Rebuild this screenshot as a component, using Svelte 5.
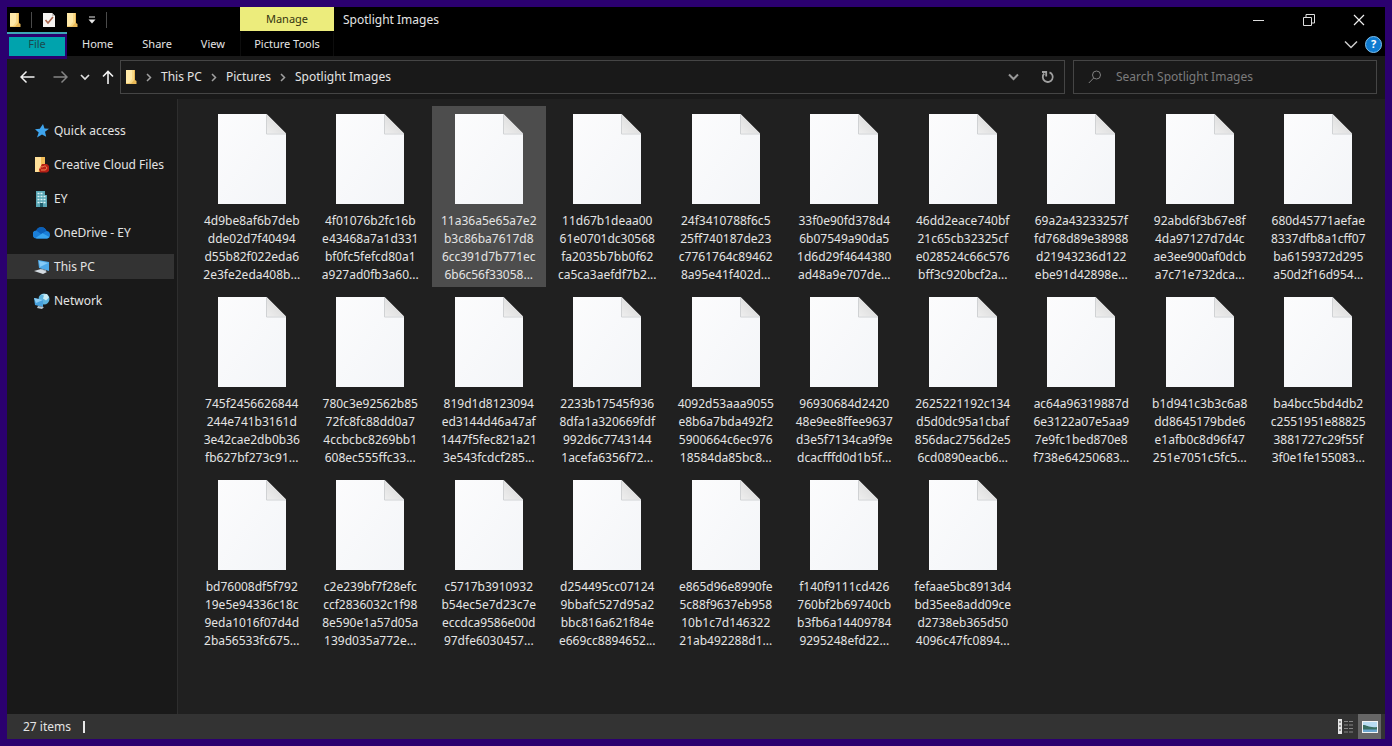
<script>
    let query = $state("");
    let selected = $state(2);
    let place = $state("This PC");

    const tabs = ["Home", "Share", "View"];
    const crumbs = ["This PC", "Pictures", "Spotlight Images"];

    const places = [
        { name: "Quick access", icon: "star" },
        { name: "Creative Cloud Files", icon: "cloudfiles" },
        { name: "EY", icon: "building" },
        { name: "OneDrive - EY", icon: "onedrive" },
        { name: "This PC", icon: "pc" },
        { name: "Network", icon: "network" },
    ];

    // One entry per file, broken into the lines shown under its icon
    const files = [
        "4d9be8af6b7deb dde02d7f40494 d55b82f022eda6 2e3fe2eda408b...",
        "4f01076b2fc16b e43468a7a1d331 bf0fc5fefcd80a1 a927ad0fb3a60...",
        "11a36a5e65a7e2 b3c86ba7617d8 6cc391d7b771ec 6b6c56f33058...",
        "11d67b1deaa00 61e0701dc30568 fa2035b7bb0f62 ca5ca3aefdf7b2...",
        "24f3410788f6c5 25ff740187de23 c7761764c89462 8a95e41f402d...",
        "33f0e90fd378d4 6b07549a90da5 1d6d29f4644380 ad48a9e707de...",
        "46dd2eace740bf 21c65cb32325cf e028524c66c576 bff3c920bcf2a...",
        "69a2a43233257f fd768d89e38988 d21943236d122 ebe91d42898e...",
        "92abd6f3b67e8f 4da97127d7d4c ae3ee900af0dcb a7c71e732dca...",
        "680d45771aefae 8337dfb8a1cff07 ba6159372d295 a50d2f16d954...",
        "745f2456626844 244e741b3161d 3e42cae2db0b36 fb627bf273c91...",
        "780c3e92562b85 72fc8fc88dd0a7 4ccbcbc8269bb1 608ec555ffc33...",
        "819d1d8123094 ed3144d46a47af 1447f5fec821a21 3e543fcdcf285...",
        "2233b17545f936 8dfa1a320669fdf 992d6c7743144 1acefa6356f72...",
        "4092d53aaa9055 e8b6a7bda492f2 5900664c6ec976 18584da85bc8...",
        "96930684d2420 48e9ee8ffee9637 d3e5f7134ca9f9e dcacfffd0d1b5f...",
        "2625221192c134 d5d0dc95a1cbaf 856dac2756d2e5 6cd0890eacb6...",
        "ac64a96319887d 6e3122a07e5aa9 7e9fc1bed870e8 f738e64250683...",
        "b1d941c3b3c6a8 dd8645179bde6 e1afb0c8d96f47 251e7051c5fc5...",
        "ba4bcc5bd4db2 c2551951e88825 3881727c29f55f 3f0e1fe155083...",
        "bd76008df5f792 19e5e94336c18c 9eda1016f07d4d 2ba56533fc675...",
        "c2e239bf7f28efc ccf2836032c1f98 8e590e1a57d05a 139d035a772e...",
        "c5717b3910932 b54ec5e7d23c7e eccdca9586e00d 97dfe6030457...",
        "d254495cc07124 9bbafc527d95a2 bbc816a621f84e e669cc8894652...",
        "e865d96e8990fe 5c88f9637eb958 10b1c7d146322 21ab492288d1...",
        "f140f9111cd426 760bf2b69740cb b3fb6a14409784 9295248efd22...",
        "fefaae5bc8913d4 bd35ee8add09ce d2738eb365d50 4096c47fc0894...",
    ].map((name) => name.split(" "));
</script>

{#snippet folder()}
    <svg width="12" height="16" viewBox="0 0 12 16" aria-hidden="true">
        <path d="M1 1h9v10l1.500 1v3H1z" fill="#e9b957" />
        <path d="M1 1h8v10l-3 3.500H1z" fill="#f9d987" />
        <path d="M1 1h6v9l-3 4H1z" fill="#ffe9a8" />
    </svg>
{/snippet}

{#snippet crumbArrow()}
    <svg width="6" height="9" viewBox="0 0 6 9" aria-hidden="true">
        <path d="M1 1l3.500 3.500L1 8" fill="none" stroke="#a0a0a0" stroke-width="1.500" />
    </svg>
{/snippet}

<div class="desktop">
    <div class="window">
        <header class="titlebar">
            <div class="quick">
                {@render folder()}
                <span class="rule"></span>
                <button class="bare" aria-label="Properties">
                    <svg width="14" height="16" viewBox="0 0 14 16">
                        <path d="M1 1h9l3 3v11H1z" fill="#f5f3f1" />
                        <path d="M10 1l3 3h-3z" fill="#c9c5c2" />
                        <path d="M3.500 8l2.500 3 5-6" fill="none" stroke="#a9664f" stroke-width="1.600" />
                    </svg>
                </button>
                <button class="bare" aria-label="New folder">{@render folder()}</button>
                <button class="bare" aria-label="Customize Quick Access Toolbar">
                    <svg width="8" height="8" viewBox="0 0 8 8">
                        <path d="M1 1h6" stroke="#e8e8e8" />
                        <path d="M.5 3.500h7L4 7.500z" fill="#e8e8e8" />
                    </svg>
                </button>
                <span class="rule"></span>
            </div>
            <div class="context">Manage</div>
            <h1>Spotlight Images</h1>
            <div class="controls">
                <button class="bare" aria-label="Minimize">
                    <svg width="12" height="12" viewBox="0 0 12 12">
                        <path d="M0 6.500h11" stroke="#ddd" />
                    </svg>
                </button>
                <button class="bare" aria-label="Restore">
                    <svg width="12" height="12" viewBox="0 0 12 12" fill="none" stroke="#ddd">
                        <path d="M.5 3.500h8v8h-8zM3 3V.5h8.500V9H9" />
                    </svg>
                </button>
                <button class="bare" aria-label="Close">
                    <svg width="12" height="12" viewBox="0 0 12 12">
                        <path d="M1 1l10 10M11 1L1 11" stroke="#eee" stroke-width="1.200" />
                    </svg>
                </button>
            </div>
        </header>

        <div class="ribbon">
            <div class="tabs">
                <button class="file">File</button>
                <div class="tab-list">
                    {#each tabs as tab}
                        <button>{tab}</button>
                    {/each}
                </div>
            </div>
            <button class="tools">Picture Tools</button>
            <div class="help">
                <button class="bare" aria-label="Expand the ribbon">
                    <svg width="14" height="9" viewBox="0 0 14 9">
                        <path d="M1 1.500l6 6 6-6" fill="none" stroke="#ccc" stroke-width="1.500" />
                    </svg>
                </button>
                <button class="bare question" aria-label="Help">?</button>
            </div>
        </div>

        <div class="location">
            <div class="history">
                <button class="bare" aria-label="Back">
                    <svg width="15" height="14" viewBox="0 0 15 14">
                        <path d="M6.500 1.500L1 7l5.500 5.500M1 7h13.500" fill="none" stroke="#f2f2f2" stroke-width="1.500" />
                    </svg>
                </button>
                <button class="bare" aria-label="Forward">
                    <svg width="15" height="14" viewBox="0 0 15 14">
                        <path d="M8.500 1.500L14 7l-5.500 5.500M14 7H.5" fill="none" stroke="#858585" stroke-width="1.500" />
                    </svg>
                </button>
                <button class="bare" aria-label="Recent locations">
                    <svg width="10" height="7" viewBox="0 0 10 7">
                        <path d="M1 1l4 4 4-4" fill="none" stroke="#e0e0e0" stroke-width="1.700" />
                    </svg>
                </button>
                <button class="bare" aria-label="Up">
                    <svg width="12" height="15" viewBox="0 0 12 15">
                        <path d="M1 6.500l5-5 5 5M6 1.500V14" fill="none" stroke="#f2f2f2" stroke-width="1.600" />
                    </svg>
                </button>
            </div>
            <nav class="address" aria-label="Address">
                {@render folder()}
                {#each crumbs as crumb}
                    {@render crumbArrow()}
                    <a href="#{crumb}">{crumb}</a>
                {/each}
                <div class="address-end">
                    <button class="bare" aria-label="Previous locations">
                        <svg width="11" height="8" viewBox="0 0 11 8">
                            <path d="M1 1.500l4.500 4.500L10 1.500" fill="none" stroke="#999" stroke-width="2" />
                        </svg>
                    </button>
                    <button class="bare" aria-label="Refresh">
                        <svg width="14" height="14" viewBox="0 0 14 14" fill="none" stroke="#a0a0a0" stroke-width="1.800">
                            <path d="M8.500 2.300A5 5 0 1 1 3.200 3.500" />
                            <path d="M1 2h4.200v4.500" />
                        </svg>
                    </button>
                </div>
            </nav>
            <label class="search">
                <svg width="14" height="14" viewBox="0 0 14 14" fill="none" stroke="#808080" aria-hidden="true">
                    <circle cx="8.500" cy="5" r="4" />
                    <path d="M5.700 8L.8 13" />
                </svg>
                <input type="text" aria-label="Search Spotlight Images" placeholder="Search Spotlight Images" bind:value={query} />
            </label>
        </div>

        <div class="body">
            <nav class="sidebar" aria-label="Places">
                {#each places as p}
                    <button class="place" class:current={place === p.name} onclick={() => (place = p.name)}>
                        <svg width="18" height="16" viewBox="0 0 18 16" aria-hidden="true">
                            {#if p.icon === "star"}
                                <path d="M10 1l1.500 4.500 4.500.3-4 3 1.200 5L9 11.500 4 14.500l1.700-5L2 6.300l4.800-.5z" fill="#3fa5ee" />
                            {:else if p.icon === "cloudfiles"}
                                <path d="M2 0h10v12l-2 3H2z" fill="#f2bd58" />
                                <path d="M2 0h6v11l-3 4H2z" fill="#ffe09a" />
                                <path d="M9 7h5l2 2v5l-2 1.500H7l-1-3z" fill="#b51f16" />
                                <path d="M7 12a2 2 0 0 1 3-2 2 2 0 1 1 2 3H8" fill="none" stroke="#f38a55" />
                            {:else if p.icon === "building"}
                                <path d="M3 0h9v4h2v12H3z" fill="#5aa6b5" />
                                <path d="M4.500 2.500h6M4.500 5.500h8M4.500 8.500h8M4.500 11.500h8" stroke="#d9f2f4" stroke-width="1.500" stroke-dasharray="2 1" />
                                <path d="M7 12h3v4H7z" fill="#1f5c6b" />
                            {:else if p.icon === "onedrive"}
                                <path d="M4 13.500a4 4 0 0 1-.8-8A5.500 5.500 0 0 1 13.500 6a3.800 3.800 0 0 1 .5 7.500z" fill="#1b7fd8" />
                                <path d="M3.200 5.500A5.500 5.500 0 0 1 13.500 6L8 9z" fill="#0b5fb8" />
                                <path d="M2.500 13L9.500 8.300l7 3.700a3 3 0 0 1-2.500 1.500H4z" fill="#38a5f0" />
                            {:else if p.icon === "pc"}
                                <path d="M5 1l11 2v9L6 9z" fill="#4da9e8" />
                                <path d="M6 2l9 2-8 4z" fill="#85cbf7" />
                                <path d="M9 10l4 1v2l-4-1z" fill="#9aa4ad" />
                                <path d="M1 12l7-2 6 3-4 2z" fill="#d5dce2" />
                            {:else}
                                <circle cx="11" cy="6" r="5.500" fill="#5db4df" />
                                <path d="M8 1.500l3 1-1 3 3 2 3-3-2-3.500z" fill="#c9ecf4" />
                                <path d="M1 5l9 2v7l-8-2z" fill="#47a1de" />
                                <path d="M1 5l9 2-7 3z" fill="#8ccdf3" />
                                <path d="M5 13l6 1-2 2-5-1z" fill="#b7c6d0" />
                            {/if}
                        </svg>
                        <span>{p.name}</span>
                    </button>
                {/each}
            </nav>

            <main class="files">
                {#each files as lines, i}
                    <button class="tile" class:selected={selected === i} onclick={() => (selected = i)}>
                        <svg width="68" height="90" viewBox="0 0 68 90" aria-hidden="true">
                            <defs>
                                <linearGradient id="page{i}" x1="0" y1="0" x2="1" y2="1">
                                    <stop offset="0" stop-color="#fcfcfd" />
                                    <stop offset="1" stop-color="#f3f5f8" />
                                </linearGradient>
                                <linearGradient id="fold{i}" x1="0" y1="1" x2="1" y2="0">
                                    <stop offset="0" stop-color="#efefef" />
                                    <stop offset="1" stop-color="#d2d2d2" />
                                </linearGradient>
                            </defs>
                            <path d="M0 0h48.500L68 19.500V90H0z" fill="url(#page{i})" />
                            <path d="M48.500 0L68 19.500H48.500z" fill="url(#fold{i})" />
                            <path d="M48.500 0v20H68" fill="none" stroke="#d0d2d4" />
                        </svg>
                        <span class="name">
                            {#each lines as line}
                                <span>{line}</span>
                            {/each}
                        </span>
                    </button>
                {/each}
            </main>
        </div>

        <footer class="status">
            <span>27 items</span>
            <span class="caret"></span>
            <div class="views">
                <button class="bare" aria-label="Details view">
                    <svg width="16" height="16" viewBox="0 0 16 16">
                        <path d="M1 0h4v15H1z" fill="#e6e6e6" />
                        <path d="M3 2v12" stroke="#444" stroke-dasharray="2 2" />
                        <path d="M7 2.500h9M7 6h9M7 9.500h9M7 13h9" stroke="#858585" stroke-dasharray="4 1" />
                    </svg>
                </button>
                <button class="bare large" aria-label="Large icons view">
                    <svg width="16" height="12" viewBox="0 0 16 12">
                        <path d="M0 0h16v12H0z" fill="#f4f4f4" />
                        <path d="M1 1h14v10H1z" fill="#b9dcf2" />
                        <path d="M1 4c4 0 6 3 14 2v3H1z" fill="#3a6f62" />
                        <path d="M1 8.500h14V11H1z" fill="#6ba6cf" />
                    </svg>
                </button>
            </div>
        </footer>
    </div>
</div>

<style>
    :global(body) {
        background: #2b006f;
    }

    .desktop {
        box-sizing: border-box;
        min-height: 100vh;
        padding: 7px;
        display: flex;
        background: #2b006f;
        color: #e4e4e4;
        font: 12px/18px "Noto Sans", "Open Sans", sans-serif;
    }

    .window {
        flex: 1;
        min-width: 0;
        display: flex;
        flex-direction: column;
        background: #202020;
    }

    button {
        font: inherit;
        color: inherit;
        border: 0;
        padding: 0;
        background: none;
    }

    .bare {
        display: flex;
        align-items: center;
        justify-content: center;
    }

    svg {
        flex: none;
    }

    .titlebar,
    .ribbon {
        display: flex;
        background: #000;
    }

    .titlebar {
        height: 25px;
    }

    .quick {
        box-sizing: border-box;
        width: 233px;
        padding-left: 2px;
        display: flex;
        align-items: center;
        gap: 10px;
    }

    .rule {
        width: 1px;
        height: 16px;
        background: #4a4a4a;
    }

    .context {
        width: 94px;
        height: 24px;
        line-height: 24px;
        text-align: center;
        font-size: 11px;
        background: #ecec7c;
        color: #34340f;
    }

    h1 {
        margin: 0 0 0 9px;
        font-size: 12px;
        font-weight: 400;
        line-height: 25px;
    }

    .controls {
        margin-left: auto;
        padding-right: 20px;
        display: flex;
        align-items: center;
        gap: 38px;
    }

    .ribbon {
        height: 24px;
        font-size: 11px;
    }

    .tabs {
        width: 233px;
        display: flex;
        gap: 15px;
    }

    .tab-list {
        display: flex;
        gap: 29px;
    }

    .file {
        position: relative;
        width: 60px;
        padding-bottom: 2px;
        border-top: 2px solid #3da6b8;
        box-shadow:
            inset 0 3px #2b006f,
            inset 2px 0 #2b006f,
            inset -2px 0 #2b006f,
            0 3px #2b006f;
        background: #00a3ad;
        color: #1a4a4e;
    }

    .tools {
        width: 94px;
        border: solid #0d0d0d;
        border-width: 0 1px;
    }

    .help {
        margin-left: auto;
        padding-right: 3px;
        display: flex;
        align-items: center;
        gap: 7px;
    }

    .question {
        box-sizing: border-box;
        width: 17px;
        height: 17px;
        border: 1px solid #7fc0ee;
        border-radius: 50%;
        background: #0f7bd0;
        color: #fff;
        font-weight: 700;
    }

    .location {
        display: flex;
        gap: 8px;
        padding: 4px 8px 5px 0;
        background: #191919;
    }

    .history {
        box-sizing: border-box;
        width: 105px;
        padding-left: 13px;
        display: flex;
        align-items: center;
        gap: 12px;
    }

    .history .bare:nth-child(2) {
        margin-left: 6px;
    }

    .address,
    .search {
        box-sizing: border-box;
        height: 34px;
        border: 1px solid #454545;
        display: flex;
        align-items: center;
    }

    .address {
        flex: 1;
        gap: 9px;
        padding: 0 9px 0 4px;
    }

    .address a {
        color: inherit;
        text-decoration: none;
    }

    .address-end {
        margin-left: auto;
        display: flex;
        align-items: center;
        gap: 22px;
    }

    .search {
        width: 304px;
        padding: 0 14px;
        gap: 14px;
    }

    .search input {
        flex: 1;
        min-width: 0;
        padding: 0;
        border: 0;
        outline: 0;
        background: none;
        color: inherit;
        font: inherit;
    }

    .search input::placeholder {
        color: #7c7c7c;
        opacity: 1;
    }

    .body {
        flex: 1;
        display: flex;
    }

    .sidebar {
        box-sizing: border-box;
        width: 171px;
        padding: 19px 3px 0 0;
        display: flex;
        flex-direction: column;
        gap: 9px;
        background: #191919;
        border-right: 1px solid #2e2e2e;
    }

    .place {
        height: 25px;
        padding-left: 26px;
        display: flex;
        align-items: center;
        gap: 3px;
        white-space: nowrap;
    }

    .place.current {
        background: #333;
    }

    .files {
        flex: 1;
        padding: 7px 10px 0 17px;
        display: grid;
        grid-template-columns: repeat(10, 1fr);
        align-content: start;
        gap: 2px 5px;
    }

    .tile {
        height: 181px;
        padding-top: 8px;
        display: flex;
        flex-direction: column;
        align-items: center;
        gap: 8px;
    }

    .tile.selected {
        background: #4d4d4d;
    }

    .name span {
        display: block;
        white-space: nowrap;
    }

    .status {
        height: 25px;
        padding-left: 16px;
        display: flex;
        align-items: center;
        gap: 12px;
        background: #333;
    }

    .caret {
        width: 2px;
        height: 12px;
        background: #e8e8e8;
    }

    .views {
        margin-left: auto;
        padding-right: 4px;
        display: flex;
        align-items: center;
        gap: 5px;
    }

    .large {
        width: 23px;
        height: 25px;
        background: #666;
    }
</style>
